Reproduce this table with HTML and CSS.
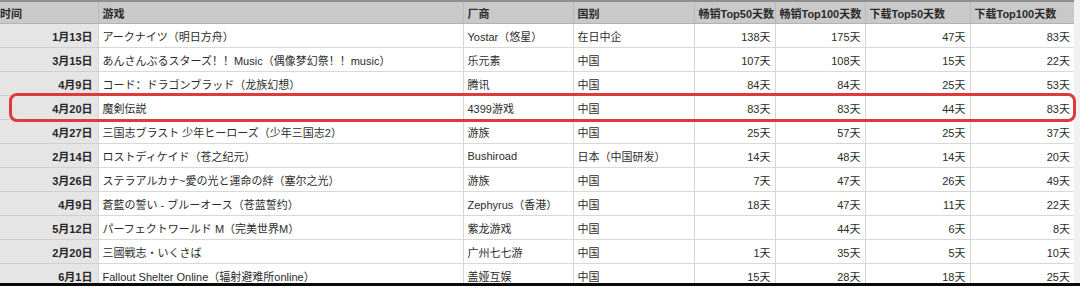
FILE: index.html
```html
<!DOCTYPE html>
<html lang="zh">
<head>
<meta charset="utf-8">
<link rel="stylesheet" href="styles.css">
</head>
<body>
<div class="sheet">
<table class="grid">
<colgroup>
<col class="c-date"><col class="c-game"><col class="c-pub"><col class="c-ctry"><col class="c-n1"><col class="c-n2"><col class="c-n3"><col class="c-n4">
</colgroup>
<thead>
<tr><th class="first">时间</th><th>游戏</th><th>厂商</th><th>国别</th><th>畅销Top50天数</th><th>畅销Top100天数</th><th>下载Top50天数</th><th>下载Top100天数</th></tr>
</thead>
<tbody>
<tr><td class="date">1月13日</td><td>アークナイツ（明日方舟）</td><td>Yostar（悠星）</td><td>在日中企</td><td class="num">138天</td><td class="num">175天</td><td class="num">47天</td><td class="num">83天</td></tr>
<tr><td class="date">3月15日</td><td>あんさんぶるスターズ！！Music（偶像梦幻祭！！music）</td><td>乐元素</td><td>中国</td><td class="num">107天</td><td class="num">108天</td><td class="num">15天</td><td class="num">22天</td></tr>
<tr><td class="date">4月9日</td><td>コード：ドラゴンブラッド（龙族幻想）</td><td>腾讯</td><td>中国</td><td class="num">84天</td><td class="num">84天</td><td class="num">25天</td><td class="num">53天</td></tr>
<tr class="hl"><td class="date">4月20日</td><td>魔剣伝説</td><td>4399游戏</td><td>中国</td><td class="num">83天</td><td class="num">83天</td><td class="num">44天</td><td class="num">83天</td></tr>
<tr><td class="date">4月27日</td><td>三国志ブラスト 少年ヒーローズ（少年三国志2）</td><td>游族</td><td>中国</td><td class="num">25天</td><td class="num">57天</td><td class="num">25天</td><td class="num">37天</td></tr>
<tr><td class="date">2月14日</td><td>ロストディケイド（苍之纪元）</td><td>Bushiroad</td><td>日本（中国研发）</td><td class="num">14天</td><td class="num">48天</td><td class="num">14天</td><td class="num">20天</td></tr>
<tr><td class="date">3月26日</td><td>ステラアルカナ~愛の光と運命の絆（塞尔之光）</td><td>游族</td><td>中国</td><td class="num">7天</td><td class="num">47天</td><td class="num">26天</td><td class="num">49天</td></tr>
<tr><td class="date">4月9日</td><td>蒼藍の誓い - ブルーオース（苍蓝誓约）</td><td>Zephyrus（香港）</td><td>中国</td><td class="num">18天</td><td class="num">47天</td><td class="num">11天</td><td class="num">22天</td></tr>
<tr><td class="date">5月12日</td><td>パーフェクトワールド M（完美世界M）</td><td>紫龙游戏</td><td>中国</td><td class="num"></td><td class="num">44天</td><td class="num">6天</td><td class="num">8天</td></tr>
<tr><td class="date">2月20日</td><td>三國戦志・いくさば</td><td>广州七七游</td><td>中国</td><td class="num">1天</td><td class="num">35天</td><td class="num">5天</td><td class="num">10天</td></tr>
<tr><td class="date">6月1日</td><td>Fallout Shelter Online（辐射避难所online）</td><td>盖娅互娱</td><td>中国</td><td class="num">15天</td><td class="num">28天</td><td class="num">18天</td><td class="num">25天</td></tr>
</tbody>
</table>
<div class="highlight"></div>
</div>
<div class="bottom-bar"></div>
</body>
</html>
```

FILE: styles.css
```css
html, body {
  margin: 0;
  padding: 0;
  background: #f1f1f1;
  overflow: hidden;
}
body {
  width: 1080px;
  height: 286px;
  font-family: "Liberation Sans", "Noto Sans CJK SC", sans-serif;
  font-size: 11px;
  color: #2c2c2c;
}
.sheet {
  position: relative;
  width: 1074px;
}
.grid {
  table-layout: fixed;
  border-collapse: collapse;
  width: 1074px;
  background: #fff;
}
.c-date { width: 98px; }
.c-game { width: 365px; }
.c-pub { width: 110px; }
.c-ctry { width: 121px; }
.c-n1 { width: 81px; }
.c-n2 { width: 90px; }
.c-n3 { width: 105px; }
.c-n4 { width: 104px; }

.grid th {
  height: 21px;
  background: #c9c9c9;
  border-top: 2px solid #8e8e8e;
  border-left: 1px solid #b9b9b9;
  border-bottom: 1px solid #b3b3b3;
  text-align: left;
  font-weight: bold;
  padding: 0 4px;
  white-space: nowrap;
  overflow: visible;
  color: #2a2a2a;
}
.grid th.first {
  border-left: none;
  padding-left: 0;
}
.grid td {
  height: 23px;
  padding: 0 4px;
  border-bottom: 1px solid #d8d8d8;
  border-left: 1px solid #d6d6d6;
  white-space: nowrap;
  overflow: hidden;
}
.grid td.date {
  background: #e5e5e5;
  border-left: none;
  border-bottom-color: #cfcfcf;
  text-align: right;
  font-weight: bold;
  padding-right: 5px;
  color: #262626;
}
.grid td.num {
  text-align: right;
}
.highlight {
  position: absolute;
  left: 9px;
  top: 93px;
  width: 1061px;
  height: 23px;
  border: 3px solid #de3a3d;
  border-radius: 8px;
  pointer-events: none;
}
.bottom-bar {
  position: fixed;
  left: 0;
  bottom: 0;
  width: 100%;
  height: 3px;
  background: #0a0a0a;
}
```
